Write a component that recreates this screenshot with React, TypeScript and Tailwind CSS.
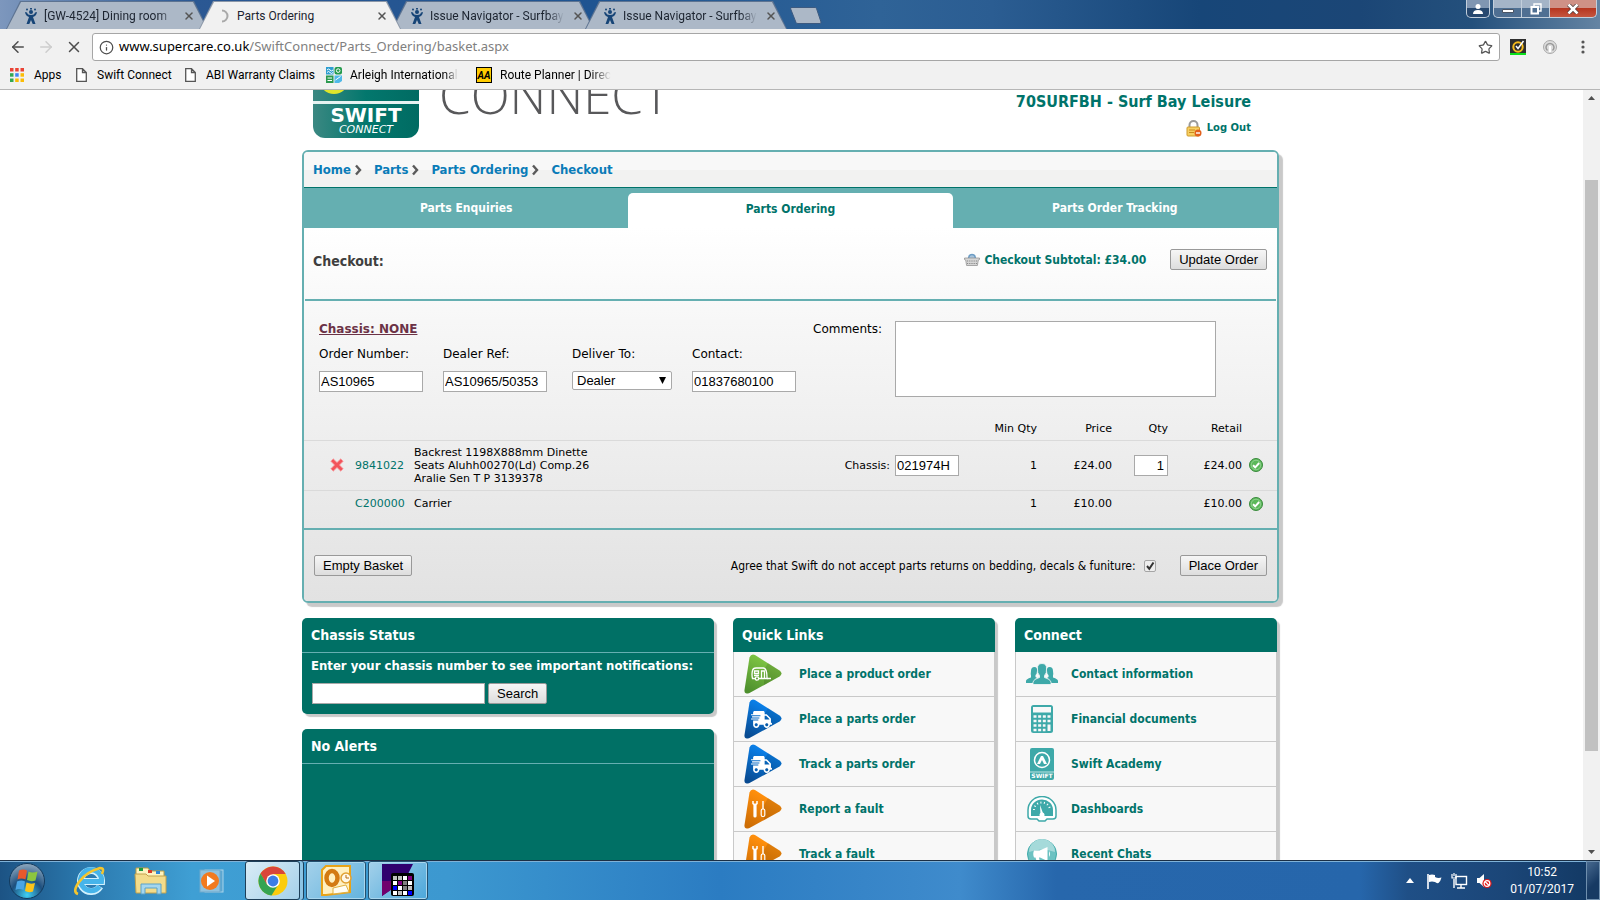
import React from "react"
import { FaShippingFast } from "react-icons/fa"
import { LuArrowLeft, LuArrowRight, LuX, LuStar, LuInfo } from "react-icons/lu"

/* ---------- small icons ---------- */

const JiraIcon = () => (
  <svg width="14" height="16" viewBox="0 0 14 16" className="shrink-0">
    <path d="M1 4q.5 4 4 5L2.500 16h2.800L7 12l1.700 4h2.800L9 9q3.500-1 4-5l-2 .5Q10.500 7 7 7T3 4.500z" fill="#174577" />
    <circle cx="7" cy="4" r="2" fill="#174577" />
    <circle cx="3" cy="1.500" r="1" fill="#174577" />
    <circle cx="7" cy=".800" r="1" fill="#174577" />
    <circle cx="11" cy="1.500" r="1" fill="#174577" />
  </svg>
)

const Spinner = () => (
  <svg width="14" height="14" viewBox="0 0 14 14" className="shrink-0">
    <path d="M5 1.500a5.500 5.500 0 0 1 0 11" fill="none" stroke="#a9a9a9" strokeWidth="2" />
  </svg>
)

const PageIcon = () => (
  <svg width="11" height="14" viewBox="0 0 11 14" className="shrink-0">
    <path d="M.7.7h5.800l3.800 3.800v8.800H.7zM6.500.7v3.800h3.800" fill="#fff" stroke="#555" strokeWidth="1.300" />
  </svg>
)

const AppsIcon = () => (
  <svg width="14" height="14" viewBox="0 0 14 14" className="shrink-0">
    <path d="M0 0h3.500v3.500H0zM5.200 0h3.500v3.500H5.200zM10.500 0H14v3.500h-3.500z" fill="#ea4335" />
    <path d="M0 5.200h3.500v3.500H0z" fill="#34a853" />
    <path d="M5.200 5.200h3.500v3.500H5.200z" fill="#4285f4" />
    <path d="M10.500 5.200H14v3.500h-3.500z" fill="#fbbc05" />
    <path d="M0 10.500h3.500V14H0z" fill="#34a853" />
    <path d="M5.200 10.500h3.500V14H5.200zM10.500 10.500H14V14h-3.500z" fill="#fbbc05" />
  </svg>
)

const ArleighIcon = () => (
  <svg width="16" height="16" viewBox="0 0 16 16" className="shrink-0">
    <rect width="7.500" height="7.500" fill="#2e9ed0" />
    <rect x="8.500" width="7.500" height="7.500" rx="2" fill="#239a4c" />
    <rect y="8.500" width="7.500" height="7.500" fill="#2c9a50" />
    <path d="M8.500 8.500H16V14l-3 2H8.500z" fill="#4fb9e8" />
    <path d="M1 3q1.500-2 3 0t3 0M1 5.500q1.500-2 3 0t3 0M1.500 11h4.500M1.500 13.500h4.500M9.500 13l5-3.500" stroke="#fff" fill="none" />
    <circle cx="12.200" cy="3.600" r="1.800" fill="none" stroke="#fff" />
  </svg>
)

const NortonIcon = () => (
  <svg width="16" height="16" viewBox="0 0 16 16">
    <rect width="16" height="16" fill="#2e2e2e" />
    <rect y="14" width="16" height="2" fill="#0be01a" />
    <circle cx="8" cy="8" r="4.700" fill="none" stroke="#f6bb1c" strokeWidth="2" />
    <path d="M6 7 8 9.500l5.500-7.500" fill="none" stroke="#fff" strokeWidth="1.500" />
  </svg>
)

const LockIcon = () => (
  <svg width="16" height="17" viewBox="0 0 16 17">
    <path d="M3.500 8V5a4 4 0 0 1 8 0v3" fill="none" stroke="#9b9b9b" strokeWidth="2" />
    <rect x="1" y="7" width="12.500" height="9" rx="1" fill="#f6cf62" stroke="#cf9a2b" />
    <path d="M3 10h6M3 12.500h5" stroke="#c98a1c" />
    <circle cx="12" cy="13" r="3.500" fill="#e2611c" />
    <path d="M10 13h4" stroke="#fff" strokeWidth="1.400" />
  </svg>
)

const BasketIcon = () => (
  <svg width="16" height="13" viewBox="0 0 16 13">
    <path d="M4.500 5.500C5 0 11 0 11.500 5.500" fill="#a8c4dc" stroke="#6b9cc4" strokeWidth="1.500" />
    <path d="M.5 5h15v1.500l-1.200.5-.9 5.500H2.600L1.700 7 .5 6.500z" fill="#d6d6d6" stroke="#8a8a8a" strokeWidth=".7" />
    <path d="M3 8h10M3 10.500h10" stroke="#888" strokeDasharray="1.200 1" />
  </svg>
)

const DeleteIcon = () => (
  <svg width="14" height="14" viewBox="0 0 14 14">
    <path d="M3.200.8 7 4.500 10.800.8l2.400 2.400L9.500 7l3.700 3.800-2.400 2.400L7 9.500l-3.800 3.700-2.400-2.400L4.500 7 .8 3.200z" fill="#f2545b" stroke="#f7a0a3" strokeWidth=".8" />
  </svg>
)

const TickIcon = () => (
  <svg width="14" height="14" viewBox="0 0 14 14">
    <circle cx="7" cy="7" r="6.500" fill="#5cb85a" stroke="#3a8a3d" />
    <circle cx="7" cy="7" r="4.800" fill="none" stroke="#9ad79a" strokeWidth=".8" />
    <path d="M4 7.200 6.200 9.300 10.200 5" fill="none" stroke="#fff" strokeWidth="1.900" />
  </svg>
)

const Chevron = () => (
  <svg width="7" height="12" viewBox="0 0 7 12">
    <path d="M1 1.500 5 6 1 10.500" fill="none" stroke="#5a5a5a" strokeWidth="2.400" />
  </svg>
)

/* ---------- browser chrome ---------- */

type TabProps = { title: string; active?: boolean }

const BrowserTab = ({ title, active = false }: TabProps) => (
  <div
    className={
      "-ml-[9px] h-[28px] w-[202px] pt-px px-px [clip-path:polygon(0_100%,14px_0,188px_0,100%_100%)] " +
      (active ? "relative z-10 bg-[#8b97a8]" : "bg-[#5d7391]")
    }
  >
    <div
      className={
        "flex h-full items-center pl-[17px] pr-[12px] [clip-path:polygon(0_100%,14px_0,186px_0,100%_100%)] " +
        (active ? "bg-[#f1f1f1]" : "bg-[#acb8c7]")
      }
    >
      {active ? <Spinner /> : <JiraIcon />}
      <span
        className={
          "ml-[6px] flex-1 whitespace-nowrap text-[12px] text-[#1c2430] " +
          (active ? "" : "[mask-image:linear-gradient(90deg,#000_88%,transparent)]")
        }
      >
        {title}
      </span>
      <button aria-label="Close tab" className="ml-[8px]">
        <LuX size={12} strokeWidth={3} className="text-[#555]" />
      </button>
    </div>
  </div>
)

const TitleBar = () => (
  <div className="flex h-[29px] items-end justify-between bg-[linear-gradient(90deg,#7d97bd_0,#2b5893_12%,#1f5491_37%,#2f6397_55%,#2b5d92_62%,#174678_75%,#1b4676_85%,#24507c_92%,#6484a3_100%)] [font-family:Roboto,sans-serif]">
    <div className="flex items-end pl-[15px]">
      <BrowserTab title="[GW-4524] Dining room" />
      <BrowserTab title="Parts Ordering" active />
      <BrowserTab title="Issue Navigator - Surfbay" />
      <BrowserTab title="Issue Navigator - Surfbay" />
      <button aria-label="New tab" className="mb-[5px] ml-[3px]">
        <svg width="32" height="17" viewBox="0 0 32 17">
          <path d="M1 .5h24q1 0 1.500 1l4.500 13.500q.3 1.500-1 1.500H8q-1.500 0-2-1L.7 2Q.3.500 1.500.5z" fill="#acb8c7" stroke="#3d5a80" />
        </svg>
      </button>
    </div>
    <div className="flex self-start pr-[3px]">
      <button aria-label="User" className="mr-[3px] flex h-[18px] w-[24px] items-center justify-center rounded-b-[5px] border border-t-0 border-[#c3cfdc] bg-[linear-gradient(#8096b2_45%,#27486f_45%)]">
        <svg width="10" height="10" viewBox="0 0 10 10" fill="#fff"><circle cx="5" cy="2.500" r="2.500" /><path d="M0 10q0-4 5-4t5 4z" /></svg>
      </button>
      <button aria-label="Minimise" className="flex h-[18px] w-[29px] items-center justify-center rounded-bl-[5px] border border-t-0 border-[#c3cfdc] bg-[linear-gradient(#a4b4c7_45%,#4f6f92_45%)]">
        <svg width="12" height="10" viewBox="0 0 12 10"><path d="M.5 5.500h11v3H.5z" fill="#fff" stroke="#4a5565" /></svg>
      </button>
      <button aria-label="Restore" className="flex h-[18px] w-[27px] items-center justify-center border-b border-[#c3cfdc] bg-[linear-gradient(#a4b4c7_45%,#4f6f92_45%)]">
        <svg width="12" height="12" viewBox="0 0 12 12" fill="none"><path d="M4 3V1h7v7H9" stroke="#fff" strokeWidth="1.400" /><rect x="1.500" y="4" width="6.500" height="6.500" stroke="#fff" strokeWidth="2" /></svg>
      </button>
      <button aria-label="Close" className="flex h-[18px] w-[48px] items-center justify-center rounded-br-[5px] border border-t-0 border-[#c3cfdc] bg-[linear-gradient(#cf9186_45%,#b5331d_45%,#c5563f)]">
        <svg width="12" height="10" viewBox="0 0 12 10"><path d="m1.500.5 9 9m0-9-9 9" stroke="#4a3a3a" strokeWidth="4" /><path d="m1.500.5 9 9m0-9-9 9" stroke="#fff" strokeWidth="2.600" /></svg>
      </button>
    </div>
  </div>
)

const Toolbar = () => (
  <div className="flex h-[36px] items-center bg-[#f1f1f1] pl-[9px] pr-[15px]">
    <button aria-label="Back"><LuArrowLeft size={18} className="text-[#4d4d4d]" /></button>
    <button aria-label="Forward" className="ml-[10px]"><LuArrowRight size={18} className="text-[#cdcdcd]" /></button>
    <button aria-label="Stop" className="ml-[10px]"><LuX size={18} className="text-[#4d4d4d]" /></button>
    <div className="ml-[9px] flex h-[28px] flex-1 items-center rounded-[3px] border border-[#a6a6a6] bg-white px-[6px]">
      <LuInfo size={15} className="text-[#4d4d4d]" />
      <div className="ml-[5px] flex-1 text-[13px] text-[#808080]">
        <span className="text-black">www.supercare.co.uk</span>/SwiftConnect/Parts_Ordering/basket.aspx
      </div>
      <button aria-label="Bookmark"><LuStar size={15} className="text-[#555]" /></button>
    </div>
    <div className="ml-[10px]"><NortonIcon /></div>
    <svg width="16" height="16" viewBox="0 0 16 16" className="ml-[16px]">
      <circle cx="8" cy="8" r="6.500" fill="#ddd" stroke="#aaa" />
      <path d="M5.500 11.500a4 4 0 1 1 5 0" fill="none" stroke="#999" strokeWidth="1.500" />
      <rect x="7" y="7" width="2" height="6" fill="#fff" />
    </svg>
    <button aria-label="Menu" className="ml-[23px]">
      <svg width="4" height="14" viewBox="0 0 4 14" fill="#555"><circle cx="2" cy="2" r="1.600" /><circle cx="2" cy="7" r="1.600" /><circle cx="2" cy="12" r="1.600" /></svg>
    </button>
  </div>
)

const Bookmarks = () => (
  <div className="flex h-[25px] items-center border-b border-[#b6b6b6] bg-[#f1f1f1] pb-[4px] pl-[10px] text-[12px] text-black [font-family:Roboto,sans-serif]">
    <a href="#" className="flex w-[66px] items-center gap-[10px]"><AppsIcon />Apps</a>
    <a href="#" className="flex w-[109px] items-center gap-[10px]"><PageIcon />Swift Connect</a>
    <a href="#" className="flex w-[141px] items-center gap-[10px]"><PageIcon />ABI Warranty Claims</a>
    <a href="#" className="flex w-[150px] items-center gap-[8px]">
      <ArleighIcon />
      <span className="whitespace-nowrap [mask-image:linear-gradient(90deg,#000_88%,transparent)]">Arleigh International</span>
    </a>
    <a href="#" className="flex items-center gap-[8px]">
      <span className="flex h-[16px] w-[16px] items-center justify-center border border-black bg-[#ffcc00] text-[10px] font-bold italic">AA</span>
      <span className="whitespace-nowrap [mask-image:linear-gradient(90deg,#000_82%,transparent)]">Route Planner | Direc</span>
    </a>
  </div>
)

/* ---------- page ---------- */

const nativeButton =
  "h-[21px] shrink-0 border border-[#999] rounded-[2px] bg-[linear-gradient(#f6f6f6,#dddddd)] px-[8px] text-[13px] leading-[18px] text-black [font-family:'Liberation_Sans',sans-serif]"
const nativeInput =
  "h-[21px] border border-[#a9a9a9] bg-white px-px text-[13px] text-black [font-family:'Liberation_Sans',sans-serif]"

const Header = () => (
  <header className="flex h-[60px] items-end overflow-hidden pb-[12px] pl-[11px] pr-[28px]">
    <svg width="106" height="106" viewBox="0 0 106 106" className="shrink-0">
      <defs>
        <linearGradient id="tile" x1="0" x2="1" y1="0" y2="0">
          <stop offset="0" stopColor="#3b8882" />
          <stop offset=".5" stopColor="#03776d" />
          <stop offset="1" stopColor="#006b62" />
        </linearGradient>
      </defs>
      <rect width="106" height="106" rx="12" fill="url(#tile)" />
      <circle cx="21" cy="47" r="15" fill="#dfe52b" />
      <rect y="69" width="106" height="3" fill="#e6f2f1" />
      <text x="53" y="90" textAnchor="middle" fontSize="20" fontWeight="bold" fill="#fff" fontFamily="DejaVu Sans">SWIFT</text>
      <text x="53" y="101" textAnchor="middle" fontSize="11" fontStyle="italic" fill="#fff" fontFamily="DejaVu Sans">CONNECT</text>
    </svg>
    <div className="ml-[20px] pb-[20px] text-[51px] font-light leading-[48px] text-[#58585a] [font-family:'Open_Sans',sans-serif]">CONNECT</div>
    <div className="ml-auto flex flex-col items-end gap-[6px] text-[#00736a]">
      <div className="text-[16px] font-bold leading-[20px]">70SURFBH - Surf Bay Leisure</div>
      <a href="#" className="flex items-center gap-[5px] text-[10px] font-bold leading-[20px] [font-family:'DejaVu_Sans',sans-serif]">
        <LockIcon />Log Out
      </a>
    </div>
  </header>
)

const crumbs = ["Home", "Parts", "Parts Ordering", "Checkout"]

const Breadcrumbs = () => (
  <nav className="flex h-[36px] items-center gap-[12px] rounded-t-[4px] border-b border-[#00736a] bg-[linear-gradient(#f8f8f8_50%,#f2f2f1_50%)] pl-[9px]">
    {crumbs.map((c, i) => (
      <span key={c} className="flex items-center gap-[4px]">
        <a href="#" className="text-[13px] font-bold text-[#0a7cb8]">{c}</a>
        {i < crumbs.length - 1 && <Chevron />}
      </span>
    ))}
  </nav>
)

const Tabs = () => (
  <div className="grid h-[40px] grid-cols-3 bg-[#65afb1] text-center text-[12px] font-bold leading-[32px] text-white">
    <a href="#" className="pt-[4px]">Parts Enquiries</a>
    <a href="#" className="mt-[5px] rounded-t-[5px] bg-white text-[#00736a]">Parts Ordering</a>
    <a href="#" className="pt-[4px]">Parts Order Tracking</a>
  </div>
)

const OrderForm = () => (
  <div className="flex px-[15px] pt-[20px] text-[12px] text-black [font-family:'DejaVu_Sans',sans-serif]">
    <div className="w-[494px]">
      <div className="pt-px font-bold leading-[14px] text-[#6b3246] underline">Chassis: NONE</div>
      <div className="mt-[10px] flex leading-[16px]">
        <label className="mr-[20px] flex flex-col gap-[9px]">
          Order Number:
          <input className={nativeInput + " w-[104px]"} defaultValue="AS10965" />
        </label>
        <label className="mr-[25px] flex flex-col gap-[9px]">
          Dealer Ref:
          <input className={nativeInput + " w-[104px]"} defaultValue="AS10965/50353" />
        </label>
        <label className="mr-[20px] flex flex-col gap-[9px]">
          Deliver To:
          <span className="relative">
            <select className="block h-[19px] w-[100px] appearance-none rounded-[2px] border border-[#a9a9a9] bg-white pl-[4px] text-[13px] leading-[17px] [font-family:'Liberation_Sans',sans-serif]">
              <option>Dealer</option>
            </select>
            <svg width="7" height="7" viewBox="0 0 7 7" className="pointer-events-none absolute right-[6px] top-[6px]"><path d="M0 0h7L3.500 7z" fill="#000" /></svg>
          </span>
        </label>
        <label className="flex flex-col gap-[9px]">
          Contact:
          <input className={nativeInput + " w-[104px]"} defaultValue="01837680100" />
        </label>
      </div>
    </div>
    <label htmlFor="comments" className="w-[82px] pt-px leading-[14px]">Comments:</label>
    <textarea id="comments" className="h-[76px] w-[321px] resize-none border border-[#a9a9a9] bg-white" />
  </div>
)

type Line = {
  code: string
  name: string
  chassis?: string
  min: number
  price: string
  qty?: string
  retail: string
}

const lines: Line[] = [
  { code: "9841022", name: "Backrest 1198X888mm Dinette Seats Aluhh00270(Ld) Comp.26 Aralie Sen T P 3139378", chassis: "021974H", min: 1, price: "£24.00", qty: "1", retail: "£24.00" },
  { code: "C200000", name: "Carrier", min: 1, price: "£10.00", retail: "£10.00" },
]

const OrderTable = () => (
  <table className="mt-[20px] w-full table-fixed text-right text-[11px] leading-[13px] text-black [font-family:'DejaVu_Sans',sans-serif]">
    <colgroup>
      <col className="w-[51px]" />
      <col className="w-[59px]" />
      <col />
      <col className="w-[150px]" />
      <col className="w-[78px]" />
      <col className="w-[75px]" />
      <col className="w-[56px]" />
      <col className="w-[74px]" />
      <col className="w-[35px]" />
    </colgroup>
    <thead>
      <tr className="h-[23px] border-b border-[#dadada]">
        <th colSpan={4}></th>
        <th className="font-normal">Min Qty</th>
        <th className="font-normal">Price</th>
        <th className="font-normal">Qty</th>
        <th className="font-normal">Retail</th>
        <th></th>
      </tr>
    </thead>
    <tbody>
      {lines.map((l) => (
        <tr key={l.code} className={l.qty ? "h-[50px] border-b border-[#dadada]" : "h-[27px]"}>
          <td className="pl-[26px] text-left">
            {l.qty && <button aria-label="Remove" className="block"><DeleteIcon /></button>}
          </td>
          <td className="text-left"><a href="#" className="text-[#00736a]">{l.code}</a></td>
          <td className="text-left"><div className="max-w-[195px]">{l.name}</div></td>
          <td>
            {l.chassis && (
              <label className="flex items-center justify-end gap-[5px]">
                Chassis:
                <input className={nativeInput + " w-[64px]"} defaultValue={l.chassis} />
              </label>
            )}
          </td>
          <td>{l.min}</td>
          <td>{l.price}</td>
          <td>{l.qty && <input aria-label="Qty" className={nativeInput + " w-[34px] pr-[3px] text-right"} defaultValue={l.qty} />}</td>
          <td>{l.retail}</td>
          <td className="pl-[7px]"><TickIcon /></td>
        </tr>
      ))}
    </tbody>
  </table>
)

const Checkout = () => (
  <main className="rounded-[6px] border-2 border-[#65afb1] shadow-[4px_4px_1px_#c9c9c9]">
    <Breadcrumbs />
    <Tabs />
    <div className="rounded-b-[4px] bg-[linear-gradient(#ffffff,#f7f7f7_25%,#e2e2e2)]">
      <div className="mx-px flex h-[73px] items-center border-b-2 border-[#65afb1] pb-[8px] pl-[8px] pr-[9px]">
        <h1 className="flex-1 pt-[4px] text-[14px] font-bold text-[#3f3f3f]">Checkout:</h1>
        <BasketIcon />
        <span className="ml-[4px] mr-[24px] pt-px text-[12px] font-bold text-[#00736a]">Checkout Subtotal: £34.00</span>
        <button className={nativeButton}>Update Order</button>
      </div>
      <OrderForm />
      <OrderTable />
      <div className="mt-[11px] flex h-[73px] items-center border-t-2 border-[#65afb1] pl-[10px] pr-[10px]">
        <button className={nativeButton}>Empty Basket</button>
        <label htmlFor="agree" className="ml-auto text-[12px] text-black">
          Agree that Swift do not accept parts returns on bedding, decals &amp; funiture:
        </label>
        <span className="relative ml-[8px] mr-[24px] flex">
          <input id="agree" type="checkbox" defaultChecked className="h-[12px] w-[12px] appearance-none rounded-[2px] border border-[#a5a5a5] bg-[#eeeeee]" />
          <svg width="12" height="12" viewBox="0 0 12 12" className="pointer-events-none absolute left-0 top-0"><path d="m3 6 2.300 2.800L9.500 2.500" fill="none" stroke="#333" strokeWidth="2" /></svg>
        </span>
        <button className={nativeButton}>Place Order</button>
      </div>
    </div>
  </main>
)

const ArrowTile = ({ from, to, children }: { from: string; to: string; children: React.ReactNode }) => (
  <span className="relative flex h-[40px] w-[38px] shrink-0 items-center">
    <svg width="38" height="40" viewBox="0 0 38 40" className="absolute">
      <defs>
        <linearGradient id={"g" + from.slice(1)} x1=".6" y1=".2" x2=".2" y2="1">
          <stop offset="0" stopColor={from} />
          <stop offset="1" stopColor={to} />
        </linearGradient>
      </defs>
      <path d="M5.500 3.500Q7-.5 11 1l24.500 15.500q4 3 0 6L5.500 39Q0 41 .5 36z" fill={`url(#g${from.slice(1)})`} />
      <path d="M24 9 35.500 16.500q4 3 0 6L20 31V16z" fill="#000" opacity=".12" />
    </svg>
    <span className="relative pl-[7px] text-white">{children}</span>
  </span>
)

const Caravan = () => (
  <svg width="20" height="14" viewBox="0 0 20 14" fill="none" stroke="#fff" strokeWidth="1.300">
    <path d="M4 11.500H1.500q-1-4 0-8Q2 1 5 1h7.500Q16 1.500 16 10.500v1H8" />
    <path d="M3.500 4h4v2.500h-4zM10.500 11.500V4h3v7.500M3 8.500h5M16 11.500h4" />
    <circle cx="6" cy="11.500" r="1.700" />
  </svg>
)

const Spanners = () => (
  <svg width="16" height="18" viewBox="0 0 16 18" fill="none" stroke="#fff">
    <path d="M2 1v2.500L4 5l2-1.500V1" strokeWidth="1.500" />
    <path d="M4 5v11" strokeWidth="3.200" strokeLinecap="round" />
    <path d="M12 1v8" strokeWidth="1.400" />
    <rect x="10.200" y="9" width="3.600" height="7.500" rx="1.500" strokeWidth="1.200" />
  </svg>
)

const CaravanTile = () => <ArrowTile from="#7cc242" to="#4d8f2d"><Caravan /></ArrowTile>
const TruckTile = () => <ArrowTile from="#0a7fe8" to="#084a90"><FaShippingFast size={21} /></ArrowTile>
const ToolsTile = () => <ArrowTile from="#ff8f0c" to="#cc6c04"><Spanners /></ArrowTile>

const PeopleIcon = () => (
  <svg width="32" height="22" viewBox="0 0 32 22" fill="#3ea9a9">
    <path d="M5 8q0-4 3.500-4 3 0 2.500 4 0 3-1.500 4v2l1.500 1q-3 1.500-3 5H0v-2q0-2 5-3.500v-2Q4.500 11 5 8z" />
    <path d="M27 8q0-4-3.500-4-3 0-2.500 4 0 3 1.500 4v2l-1.500 1q3 1.500 3 5h8v-2q0-2-5-3.500v-2q.5-1.500 0-4.500z" />
    <path d="M11.500 6Q11 .5 16 .5T20.500 6q.5 4-2 6.500v2q6 1.500 6.500 4.500v2.500H7V19q.5-3 6.500-4.500v-2Q11 10 11.500 6z" stroke="#f8f8f8" strokeWidth=".8" />
  </svg>
)

const CalculatorIcon = () => (
  <svg width="22" height="28" viewBox="0 0 22 28">
    <rect width="22" height="28" rx="2.500" fill="#3ea9a9" />
    <path d="M2 2h18v5.500H2z" fill="#f8f8f8" />
    <path d="M2.500 11.500h17M2.500 16h17M2.500 20.500h12M2.500 25h12" stroke="#f8f8f8" strokeWidth="2.600" strokeDasharray="3 1.660" />
    <path d="M16.500 19.500h3v6.500h-3z" fill="#f8f8f8" />
  </svg>
)

const AcademyIcon = () => (
  <svg width="24" height="32" viewBox="0 0 24 32">
    <rect width="24" height="32" rx="2" fill="#3ea9a9" />
    <circle cx="12" cy="12" r="7.500" fill="none" stroke="#fff" strokeWidth="1.500" />
    <path d="M7 16 11 8h2l4 8h-3l-2-4-2 4z" fill="#fff" />
    <path d="M0 24h24" stroke="#bfe3e3" />
    <text x="12" y="30" textAnchor="middle" fontSize="6" fontWeight="bold" fill="#fff" fontFamily="DejaVu Sans">SWIFT</text>
  </svg>
)

const GaugeIcon = () => (
  <svg width="30" height="26" viewBox="0 0 30 26">
    <path d="M1 20V14a14 13.500 0 0 1 28 0v6q0 3-3 3h-6l-2 2h-6l-2-2H4q-3 0-3-3z" fill="#fff" stroke="#3ea9a9" strokeWidth="1.500" />
    <path d="M4 20v-6a11 10.500 0 0 1 22 0v6z" fill="#3ea9a9" />
    <path d="M7 14a8 7.500 0 0 1 16 0" fill="none" stroke="#fff" strokeWidth="2" strokeDasharray="1 2.500" />
    <path d="m13 9 3.500 9.500h-3z" fill="#fff" />
    <circle cx="15" cy="19" r="2.500" fill="#fff" />
  </svg>
)

const ChatIcon = () => (
  <svg width="30" height="30" viewBox="0 0 30 30">
    <circle cx="15" cy="15" r="14.500" fill="#6cc2c2" stroke="#3ea9a9" />
    <path d="M2 13a13 13 0 0 1 26 0q-13-5-26 0z" fill="#a5dada" />
    <path d="M20.500 8v14L13 18.500h-1l1 5h-3l-1.500-5H7q-1.500-3.500 0-7h5.500zM22 12q2 3 0 6z" fill="#fff" />
  </svg>
)

const quickLinks = [
  { icon: <CaravanTile />, label: "Place a product order" },
  { icon: <TruckTile />, label: "Place a parts order" },
  { icon: <TruckTile />, label: "Track a parts order" },
  { icon: <ToolsTile />, label: "Report a fault" },
  { icon: <ToolsTile />, label: "Track a fault" },
]

const connectLinks = [
  { icon: <PeopleIcon />, label: "Contact information" },
  { icon: <CalculatorIcon />, label: "Financial documents" },
  { icon: <AcademyIcon />, label: "Swift Academy" },
  { icon: <GaugeIcon />, label: "Dashboards" },
  { icon: <ChatIcon />, label: "Recent Chats" },
]

type LinkPanelProps = { title: string; links: { icon: React.ReactNode; label: string }[]; connect?: boolean }

const LinkPanel = ({ title, links, connect = false }: LinkPanelProps) => (
  <section className="w-[262px] shrink-0 self-start rounded-t-[5px] shadow-[3px_3px_1px_#c9c9c9]">
    <h2 className="h-[34px] rounded-t-[5px] bg-[#007065] pl-[9px] text-[14px] font-bold leading-[34px] text-white">{title}</h2>
    <ul className="border-x border-[#c9c9c9] bg-[#f8f8f8]">
      {links.map((l) => (
        <li key={l.label} className="h-[45px] border-b border-[#c9c9c9]">
          <a href="#" className="flex h-full items-center pl-[10px] text-[12px] font-bold text-[#00736a]">
            <span className={connect ? "flex w-[32px] justify-center" : "w-[38px]"}>{l.icon}</span>
            <span className={connect ? "ml-[13px]" : "ml-[17px]"}>{l.label}</span>
          </a>
        </li>
      ))}
    </ul>
  </section>
)

const StatusPanels = () => (
  <div className="flex flex-1 flex-col gap-[15px]">
    <section className="h-[96px] rounded-[5px] bg-[#007065] text-white shadow-[3px_3px_1px_#c9c9c9]">
      <h2 className="h-[35px] border-b border-[#65afb1] pl-[9px] text-[14px] font-bold leading-[34px]">Chassis Status</h2>
      <div className="px-[9px] pt-[4px]">
        <label htmlFor="chassis" className="block text-[13px] font-bold leading-[18px]">
          Enter your chassis number to see important notifications:
        </label>
        <div className="mt-[8px] flex gap-[3px] pl-px">
          <input id="chassis" className={nativeInput + " w-[173px]"} />
          <button className={nativeButton}>Search</button>
        </div>
      </div>
    </section>
    <section className="h-[300px] rounded-[5px] bg-[#007065] text-white shadow-[3px_3px_1px_#c9c9c9]">
      <h2 className="h-[35px] border-b border-[#65afb1] pl-[9px] text-[14px] font-bold leading-[34px]">No Alerts</h2>
    </section>
  </div>
)

const Scrollbar = () => (
  <div className="flex w-[17px] shrink-0 flex-col items-center justify-between bg-[#f1f1f1] py-[6px]">
    <svg width="7" height="4" viewBox="0 0 7 4"><path d="M0 4 3.500 0 7 4z" fill="#505050" /></svg>
    <div className="mb-[99px] mt-auto h-[571px] w-[13px] bg-[#c1c1c1]" />
    <svg width="7" height="4" viewBox="0 0 7 4"><path d="M0 0h7L3.500 4z" fill="#505050" /></svg>
  </div>
)

/* ---------- taskbar ---------- */

const StartOrb = () => (
  <svg width="38" height="38" viewBox="0 0 38 38">
    <defs>
      <radialGradient id="orb" cx=".5" cy=".9" r=".9">
        <stop offset="0" stopColor="#3fd0f5" />
        <stop offset=".5" stopColor="#1d4f7e" />
        <stop offset="1" stopColor="#8fa9c0" />
      </radialGradient>
    </defs>
    <circle cx="19" cy="19" r="17.500" fill="url(#orb)" stroke="#123a5e" />
    <path d="M11 8.500q4.500-2 8 0l-1.500 9q-4.500-2-8 0z" fill="#e8582b" />
    <path d="M20.500 9.500q4 2 9 0l-2 9q-4.500 1.500-8.500-.5z" fill="#8cc63f" />
    <path d="M9 19.500q4.500-2 8 0L15.500 28q-4.500-2-8 0z" fill="#4aa5e5" />
    <path d="M18.500 20.500q4 2 8.500.5L25 29.500q-4.500 1.500-8-.5z" fill="#fcc419" />
  </svg>
)

const IeIcon = () => (
  <svg width="32" height="32" viewBox="0 0 32 32" fill="none">
    <path d="M27 21.500a10.500 10.500 0 1 1 1.500-5H10" stroke="#d2f1fd" strokeWidth="7" />
    <path d="M26.500 21.500a10.500 10.500 0 1 1 2-5H10" stroke="#46b4ea" strokeWidth="5" />
    <path d="M5 29Q-1 27 6 17T27 3q5 0 2 6" stroke="#f5c52c" strokeWidth="2.600" />
  </svg>
)

const ExplorerIcon = () => (
  <svg width="34" height="30" viewBox="0 0 34 30">
    <path d="M2 2h12l2 3h14v6H2z" fill="#fdf3bf" stroke="#b99b45" />
    <path d="M5 2h4v3H5z" fill="#1c9b3c" /><path d="M14 4h4v3h-4z" fill="#d63b28" /><path d="M22 5h4v3h-4z" fill="#2c86d6" />
    <path d="M1 8h11l2 2h18v17H2z" fill="#f3dc8b" stroke="#c2a24c" />
    <path d="M7 28V18h20v10h-4v-6H11v6z" fill="#a5d6ee" stroke="#5aa2c8" />
  </svg>
)

const MediaIcon = () => (
  <svg width="28" height="26" viewBox="0 0 28 26">
    <rect x="6" y="2" width="18" height="22" fill="#5aa7d2" stroke="#a9d3ea" />
    <rect x="1" y="2" width="20" height="22" fill="#8fc2df" stroke="#6fa9cb" />
    <circle cx="11" cy="13" r="9" fill="#f27a1f" />
    <path d="M8 7.500 16 13l-8 5.500z" fill="#fff" />
  </svg>
)

const ChromeIcon = () => (
  <svg width="30" height="30" viewBox="0 0 30 30">
    <circle cx="15" cy="15" r="14.500" fill="#fccc0c" />
    <path d="M2.500 7.600A14.500 14.500 0 0 1 27.600 8H15l-6 11z" fill="#d9453a" />
    <path d="M2.500 7.600A14.500 14.500 0 0 0 13.500 29.500L20 19l-11-.5z" fill="#35a453" />
    <circle cx="15" cy="15" r="6.800" fill="#fff" />
    <circle cx="15" cy="15" r="5.400" fill="#3c7de6" />
  </svg>
)

const OutlookIcon = () => (
  <svg width="31" height="31" viewBox="0 0 31 31">
    <path d="M5 1h24v26l-24 3H1V5z" fill="#fff0c0" stroke="#e8a317" strokeWidth="2" />
    <ellipse cx="11" cy="13" rx="5.500" ry="7" fill="none" stroke="#d37a12" strokeWidth="4.500" />
    <path d="m12 23 13-3 3 7-16 2z" fill="#fffdf2" stroke="#e0b040" />
    <circle cx="25" cy="13" r="5" fill="#fff8e6" stroke="#e0a030" strokeWidth="1.500" />
    <path d="M25 10v3h3" fill="none" stroke="#b66b10" />
  </svg>
)

const cells = ["#c0c0c0", "#c0c0c0", "#fff", "#800080", "#fff", "#800080", "#808080", "#fff", "#00f", "#fff", "#808080", "#c0c0c0", "#fff", "#c0c0c0", "#fff", "#00f"]

const GridAppIcon = () => (
  <svg width="34" height="33" viewBox="0 0 34 33">
    <path d="M1 0h31l-6 12H12v12L1 32z" fill="#30006e" />
    <path d="M1 17h9v9l-9 6z" fill="#70006e" />
    <rect x="10" y="9" width="23" height="23" rx="2" fill="#000" />
    {cells.map((c, i) => (
      <rect key={i} x={12 + (i % 4) * 5} y={12 + Math.floor(i / 4) * 5} width="4" height="4" fill={c} />
    ))}
  </svg>
)

const taskButton = "flex h-[39px] w-[60px] items-center justify-center rounded-[3px] border border-[#23506f] shadow-[inset_0_0_0_1px_#a8d6ee]"

const Taskbar = () => (
  <footer className="flex h-[40px] shrink-0 items-center border-t border-[#1b2f45] bg-[linear-gradient(90deg,#1c5384_0,#2a77ac_5%,#3f9fd4_12%,#3c98d0_28%,#2b7cc2_45%,#3f8bcc_60%,#2767ac_66%,#2666ab_85%,#1f4f86_88%,#1b4678_94%,#123862_100%)] shadow-[inset_0_1px_0_#7fb2d8]">
    <button aria-label="Start" className="ml-[8px]"><StartOrb /></button>
    <button aria-label="Internet Explorer" className="ml-[27px]"><IeIcon /></button>
    <button aria-label="Explorer" className="ml-[29px]"><ExplorerIcon /></button>
    <button aria-label="Media Player" className="ml-[31px]"><MediaIcon /></button>
    <div className="ml-[18px] flex gap-[2px]">
      <button aria-label="Chrome" className="mr-[4px] flex h-[39px] w-[55px] items-center justify-center rounded-[3px] border border-[#1d3f59] bg-[linear-gradient(135deg,#d9ecf6,#a4d0ea)] shadow-[3px_0_0_#8cc4e4,4px_0_0_#1d3f59]">
        <ChromeIcon />
      </button>
      <button aria-label="Outlook" className={taskButton + " bg-[linear-gradient(135deg,#a4d1ea,#63b3de)]"}><OutlookIcon /></button>
      <button aria-label="Grid" className={taskButton + " bg-[linear-gradient(135deg,#a4d1ea,#4ba7da)]"}><GridAppIcon /></button>
    </div>
    <div className="ml-auto flex h-full items-center text-white">
      <svg width="8" height="5" viewBox="0 0 8 5" className="mr-[12px]"><path d="M0 5 4 0l4 5z" fill="#fff" /></svg>
      <svg width="18" height="16" viewBox="0 0 18 16" className="mr-[7px]">
        <path d="M2 1v15" stroke="#fff" strokeWidth="1.600" />
        <path d="M3 2q3-1 6 0v2q3 1.500 6.500.5-1 4-3 5.500-2 .5-3.500-1-3-1-6 0z" fill="#fff" />
      </svg>
      <svg width="17" height="16" viewBox="0 0 17 16" fill="none" stroke="#fff" className="mr-[8px]">
        <rect x="5" y="3.500" width="10.500" height="8" strokeWidth="1.400" />
        <path d="M6 15h8M10 12v3M3 6v9" strokeWidth="1.400" />
        <path d="M1 1v4h4V1M3 0v3" strokeWidth="1.200" />
      </svg>
      <svg width="17" height="16" viewBox="0 0 17 16" className="mr-[17px]">
        <path d="M1 5h2.500L8 1v13l-4.500-4H1z" fill="#fff" />
        <circle cx="11" cy="10.500" r="4.600" fill="#e01b1b" />
        <circle cx="11" cy="10.500" r="2.800" fill="none" stroke="#fff" strokeWidth="1.200" />
        <path d="m9 8.500 4 4" stroke="#fff" strokeWidth="1.200" />
      </svg>
      <div className="mr-[12px] text-center text-[12px] leading-[17px] [font-family:Roboto,sans-serif]">
        <div>10:52</div>
        <div>01/07/2017</div>
      </div>
      <button aria-label="Show desktop" className="h-full w-[14px] border border-[#6f8fae] bg-[linear-gradient(135deg,#47698f,#173a63_60%)]" />
    </div>
  </footer>
)

export default function App() {
  return (
    <div className="flex h-screen flex-col overflow-hidden bg-white [font-family:'Noto_Sans',sans-serif]">
      <TitleBar />
      <Toolbar />
      <Bookmarks />
      <div className="flex min-h-0 flex-1">
        <div className="min-w-0 flex-1 overflow-hidden [font-family:'DejaVu_Sans_Condensed','DejaVu_Sans',sans-serif]">
          <div className="mx-auto w-full max-w-[979px] pr-[2px]">
            <Header />
            <Checkout />
            <div className="mt-[15px] flex pr-[2px]">
              <StatusPanels />
              <div className="ml-[19px] flex gap-[20px]">
                <LinkPanel title="Quick Links" links={quickLinks} />
                <LinkPanel title="Connect" links={connectLinks} connect />
              </div>
            </div>
          </div>
        </div>
        <Scrollbar />
      </div>
      <Taskbar />
    </div>
  )
}
